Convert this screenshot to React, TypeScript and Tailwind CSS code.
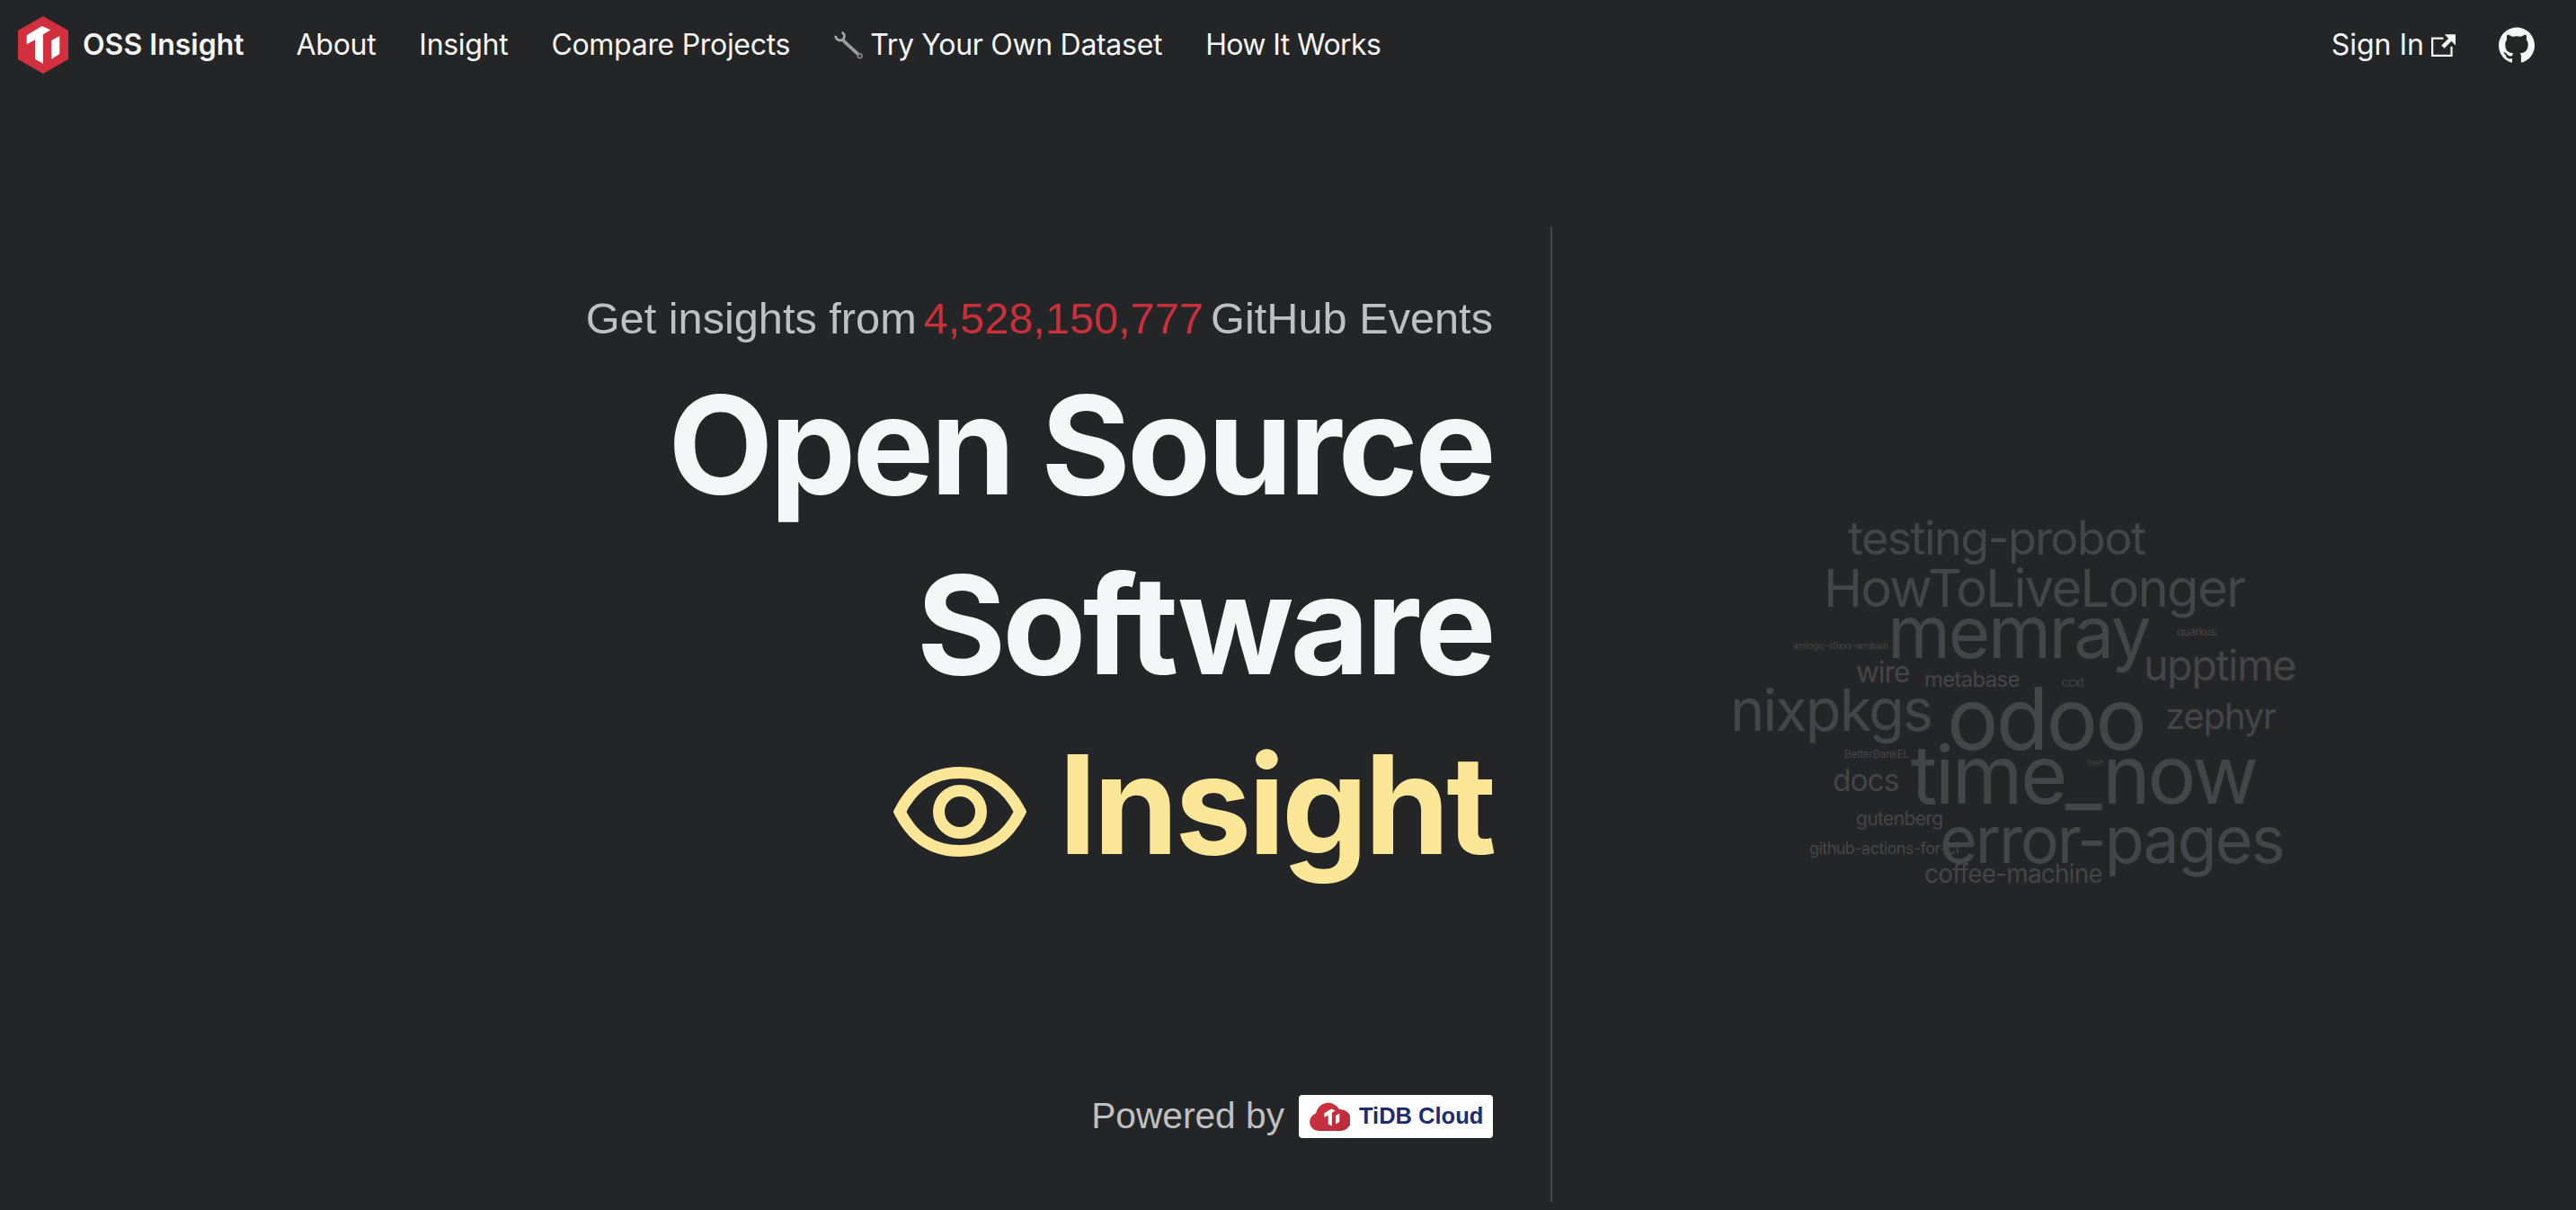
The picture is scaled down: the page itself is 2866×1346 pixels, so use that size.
import { SiGithub } from "react-icons/si";

const navLinks = ["About", "Insight", "Compare Projects"];

const cloudWords = [
  { text: "testing-probot", cls: "left-[136px] top-[13px] text-[52px]" },
  { text: "HowToLiveLonger", cls: "left-[109px] top-[65px] text-[58px]" },
  { text: "memray", cls: "left-[180px] top-[103px] text-[80px]" },
  { text: "quarkus", cls: "left-[502px] top-[137px] text-[12px]" },
  { text: "amlogic-s9xxx-armbian", cls: "left-[75px] top-[153px] text-[10px]" },
  { text: "wire", cls: "left-[145px] top-[172px] text-[31.5px]" },
  { text: "metabase", cls: "left-[221px] top-[184px] text-[24px]" },
  { text: "ccxt", cls: "left-[374px] top-[193px] text-[13px]" },
  { text: "upptime", cls: "left-[465px] top-[157px] text-[46.5px]" },
  { text: "nixpkgs", cls: "left-[5px] top-[197px] text-[65px]" },
  { text: "odoo", cls: "left-[246px] top-[191px] text-[96px]" },
  { text: "zephyr", cls: "left-[489px] top-[217px] text-[40px]" },
  { text: "BetterBankEL", cls: "left-[132px] top-[273px] text-[12px]" },
  { text: "bash", cls: "left-[403px] top-[284px] text-[8px]" },
  { text: "time_now", cls: "left-[206px] top-[257px] text-[90px]" },
  { text: "docs", cls: "left-[119px] top-[292px] text-[33.5px]" },
  { text: "gutenberg", cls: "left-[145px] top-[340px] text-[21px]" },
  { text: "github-actions-for-ci", cls: "left-[93px] top-[375px] text-[18px]" },
  { text: "error-pages", cls: "left-[238px] top-[338px] text-[72px]" },
  { text: "coffee-machine", cls: "left-[221px] top-[398px] text-[28px]" },
];

const tiMark = "M9.7 21.3 26.7 11 36.3 15.3 28 20.3V52.700L19 47.700V26.300L9.7 31.300ZM37.300 27 46.300 22V42L37.300 47.700Z";

function Logo() {
  return (
    <svg viewBox="0 0 56 64" className="w-[56px] h-[64px]">
      <path d="M28 0 56 16V48L28 64 0 48V16Z" fill="#d3303f" />
      <path d={tiMark} fill="#fff" />
    </svg>
  );
}

function Wrench() {
  return (
    <svg viewBox="25 20 105 95" className="w-[35px] h-[32px] shrink-0" fill="none">
      <path d="M33 37C33 50 50 58 60 46 65 38 62 30 54 25" stroke="#a4a8ad" strokeWidth="8" />
      <path d="M55 50 110 100" stroke="#9a9ea4" strokeWidth="11" />
      <circle cx="114" cy="104" r="7" stroke="#8a7e80" strokeWidth="5" fill="#2b2b2d" />
    </svg>
  );
}

function ExternalLink() {
  return (
    <svg viewBox="0 0 24 24" className="w-[27px] h-[27px]">
      <path
        fill="currentColor"
        d="M21 13v10h-21v-19h12v2h-10v15h17v-8h2zm3-12h-10.988l4.035 4-6.977 7.07 2.828 2.828 6.977-7.07 4.125 4.172v-11z"
      />
    </svg>
  );
}

function Eye() {
  return (
    <svg viewBox="0 0 148 100" className="w-[148px] h-[100px] mt-[16px]" fill="none" stroke="#fce798" strokeWidth="13">
      <path d="M7 50C22 20 44 6.500 74 6.500S126 20 141 50C126 80 104 93.500 74 93.500S22 80 7 50Z" />
      <circle cx="74" cy="50" r="23.500" />
    </svg>
  );
}

function TidbCloud() {
  return (
    <div className="flex items-center w-[216px] h-[48px] bg-white rounded-[4px] pl-[12px] gap-[10px]">
      <svg viewBox="0 0 45 33" className="w-[45px] h-[33px] shrink-0">
        <defs>
          <linearGradient id="cloud" x1="0" y1="0" x2="1" y2="1">
            <stop offset="0" stopColor="#d5333f" />
            <stop offset="1" stopColor="#b42a3b" />
          </linearGradient>
        </defs>
        <path d="M10 33A10 10 0 0 1 7 13.500 14 14 0 0 1 33 9 12 12 0 0 1 35 33Z" fill="url(#cloud)" />
        <path d={tiMark} fill="#fff" transform="translate(12 3.500) scale(.46)" />
      </svg>
      <span className="font-['Liberation_Sans',sans-serif] font-bold text-[25.500px] leading-none text-[#1c2c6e]">TiDB Cloud</span>
    </div>
  );
}

export default function App() {
  return (
    <div className="min-h-[1346px] bg-[#242526] text-[#f5f6f7] font-['Inter',sans-serif] overflow-hidden">
      <nav className="h-[100px] flex items-center justify-between pl-[20px] pr-[46px] text-[32px]">
        <div className="flex items-center">
          <a className="flex items-center gap-[16px] mr-[58px]">
            <Logo />
            <span className="font-semibold">OSS Insight</span>
          </a>
          <div className="flex items-center gap-[48px] tracking-[-0.3px]">
            {navLinks.map((link) => (
              <a key={link}>{link}</a>
            ))}
            <a className="flex items-center gap-[6px]">
              <Wrench />
              Try Your Own Dataset
            </a>
            <a className="tracking-[-0.6px]">How It Works</a>
          </div>
        </div>
        <div className="flex items-center gap-[48px]">
          <a className="flex items-center gap-[8px]">
            Sign In
            <ExternalLink />
          </a>
          <SiGithub className="w-[40px] h-[40px]" />
        </div>
      </nav>

      <main className="flex h-[1246px]">
        <section className="w-[1725px] pr-[64px] flex flex-col items-end">
          <p className="mt-[218px] flex gap-[8px] font-['Liberation_Sans',sans-serif] text-[48.700px] leading-[72px] text-[#bfc0c1]">
            <span>Get insights from</span>
            <span className="text-[#c9303c]">4,528,150,777</span>
            <span>GitHub Events</span>
          </p>
          <h1 className="mt-[5px] flex flex-col items-end font-bold text-[152px] leading-[200px] tracking-[-3.800px]">
            <span>Open Source</span>
            <span>Software</span>
            <span className="flex items-center gap-[36px] text-[#fce798]">
              <Eye />
              Insight
            </span>
          </h1>
          <div className="mt-[216px] flex items-center gap-[16px]">
            <span className="font-['Liberation_Sans',sans-serif] text-[40.700px] text-[#bfc0c1]">Powered by</span>
            <TidbCloud />
          </div>
        </section>

        <div className="w-[2px] h-[1085px] mt-[152px] bg-[#444548]" />

        <section className="flex-1 pl-[193px] pt-[460px]">
          <div className="relative w-[640px] h-[440px] text-[#444548]">
            {cloudWords.map((word) => (
              <span key={word.text} className={`absolute leading-none whitespace-nowrap tracking-[-0.03em] ${word.cls}`}>
                {word.text}
              </span>
            ))}
          </div>
        </section>
      </main>
    </div>
  );
}
